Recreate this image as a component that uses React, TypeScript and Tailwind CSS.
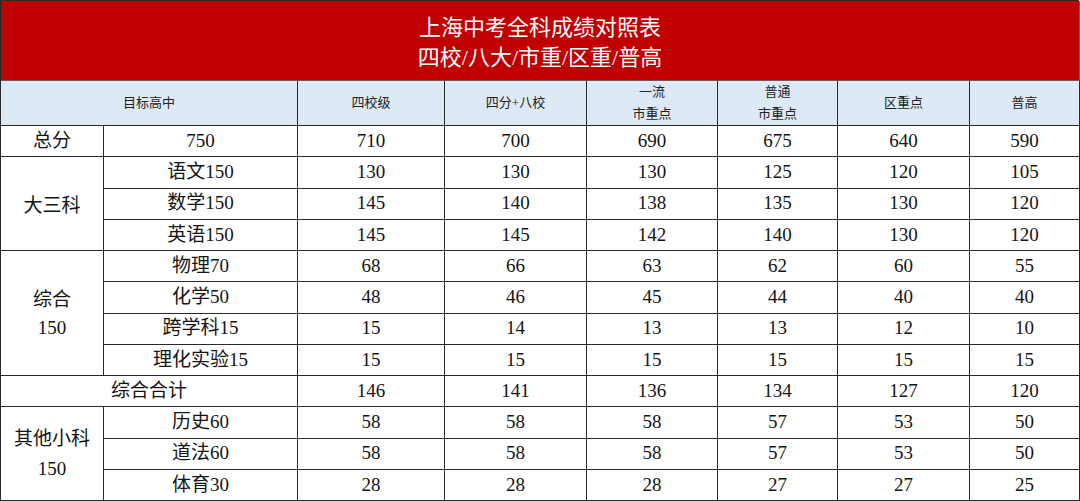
import React from "react";

const cols = "grid-cols-[103px_194px_147px_142px_131px_120px_132px_110px]";

const cell =
  "flex items-center justify-center border-r border-b border-[#2a2a2a] text-center";

type Row = { label: string; vals: (string | number)[] };

function Vals({ vals }: { vals: (string | number)[] }) {
  return (
    <>
      {vals.map((v, i) => (
        <div key={i} className={cell}>
          {v}
        </div>
      ))}
    </>
  );
}

export default function App() {
  const big3: Row[] = [
    { label: "语文150", vals: [130, 130, 130, 125, 120, 105] },
    { label: "数学150", vals: [145, 140, 138, 135, 130, 120] },
    { label: "英语150", vals: [145, 145, 142, 140, 130, 120] },
  ];
  const zonghe: Row[] = [
    { label: "物理70", vals: [68, 66, 63, 62, 60, 55] },
    { label: "化学50", vals: [48, 46, 45, 44, 40, 40] },
    { label: "跨学科15", vals: [15, 14, 13, 13, 12, 10] },
    { label: "理化实验15", vals: [15, 15, 15, 15, 15, 15] },
  ];
  const others: Row[] = [
    { label: "历史60", vals: [58, 58, 58, 57, 53, 50] },
    { label: "道法60", vals: [58, 58, 58, 57, 53, 50] },
    { label: "体育30", vals: [28, 28, 28, 27, 27, 25] },
  ];

  return (
    <div className="w-[1080px] h-[501px] bg-white overflow-hidden">
      <div
        className={`grid ${cols} grid-rows-[80px_45px_repeat(12,1fr)] h-[501px] w-[1079px] border-l border-t border-[#2a2a2a] text-[19px] text-[#141414]`}
        style={{ fontFamily: '"Liberation Serif", "Noto Sans CJK SC", serif' }}
      >
        {/* Title */}
        <div className="col-span-8 flex flex-col items-center justify-center bg-[#c00000] border-r border-b border-[#6d5a5a] text-white text-[22px] leading-[30px] pt-[4px]">
          <div>上海中考全科成绩对照表</div>
          <div>四校/八大/市重/区重/普高</div>
        </div>

        {/* Header */}
        <div className={`${cell} col-span-2 bg-[#dde9f4] text-[13px] text-[#222]`}>目标高中</div>
        <div className={`${cell} bg-[#dde9f4] text-[13px] text-[#222]`}>四校级</div>
        <div className={`${cell} bg-[#dde9f4] text-[13px] text-[#222]`}>四分+八校</div>
        <div className={`${cell} flex-col bg-[#dde9f4] text-[13px] leading-[22px] text-[#222]`}>
          <span>一流</span>
          <span>市重点</span>
        </div>
        <div className={`${cell} flex-col bg-[#dde9f4] text-[13px] leading-[22px] text-[#222]`}>
          <span>普通</span>
          <span>市重点</span>
        </div>
        <div className={`${cell} bg-[#dde9f4] text-[13px] text-[#222]`}>区重点</div>
        <div className={`${cell} bg-[#dde9f4] text-[13px] text-[#222]`}>普高</div>

        {/* 总分 */}
        <div className={cell}>总分</div>
        <div className={cell}>750</div>
        <Vals vals={[710, 700, 690, 675, 640, 590]} />

        {/* 大三科 */}
        <div className={`${cell} row-span-3 pt-[6px]`}>大三科</div>
        {big3.map((r) => (
          <React.Fragment key={r.label}>
            <div className={cell}>{r.label}</div>
            <Vals vals={r.vals} />
          </React.Fragment>
        ))}

        {/* 综合 */}
        <div className={`${cell} row-span-4 flex-col leading-[28px] pt-[2px]`}>
          <span>综合</span>
          <span>150</span>
        </div>
        {zonghe.map((r) => (
          <React.Fragment key={r.label}>
            <div className={cell}>{r.label}</div>
            <Vals vals={r.vals} />
          </React.Fragment>
        ))}

        {/* 综合合计 */}
        <div className={`${cell} col-span-2`}>综合合计</div>
        <Vals vals={[146, 141, 136, 134, 127, 120]} />

        {/* 其他小科 */}
        <div className={`${cell} row-span-3 flex-col leading-[30px]`}>
          <span>其他小科</span>
          <span>150</span>
        </div>
        {others.map((r) => (
          <React.Fragment key={r.label}>
            <div className={cell}>{r.label}</div>
            <Vals vals={r.vals} />
          </React.Fragment>
        ))}
      </div>
    </div>
  );
}
